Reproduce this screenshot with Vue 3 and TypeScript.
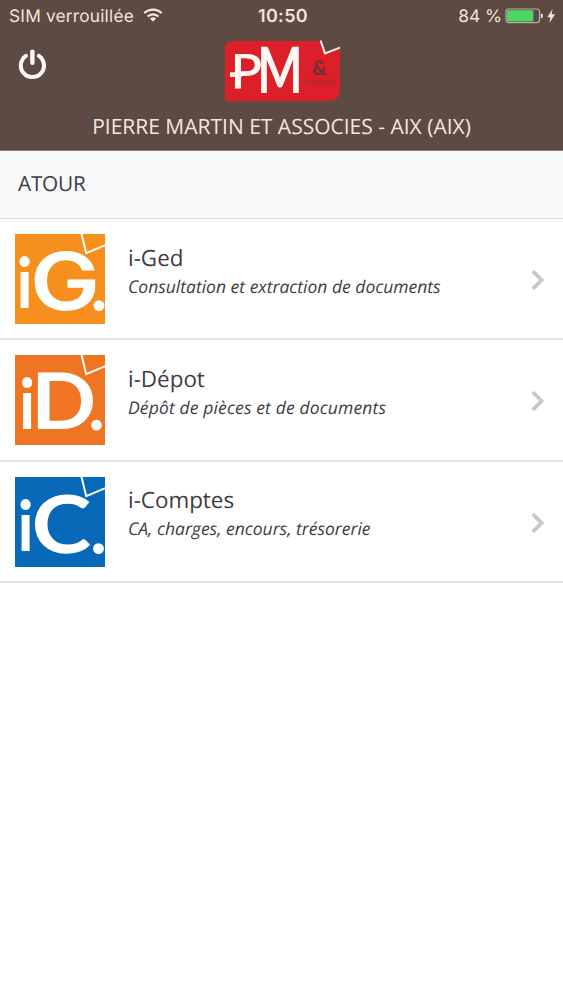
<script setup lang="ts">
interface Glyph {
  char: string
  x: number
  y: number
  sx: number
  size: number
  round?: boolean
}

interface Service {
  title: string
  detail: string
  color: string
  glyphs: Glyph[]
  dot: { x: number; y: number }
  wide?: boolean
}

const services: Service[] = [
  {
    title: 'i-Ged',
    detail: 'Consultation et extraction de documents',
    color: '#f78f1e',
    glyphs: [
      { char: 'i', x: 1.6, y: 74, sx: 0.91, size: 70 },
      { char: 'G', x: 15, y: 76, sx: 1.17, size: 80, round: true },
    ],
    dot: { x: 84, y: 71.6 },
  },
  {
    title: 'i-Dépot',
    detail: 'Dépôt de pièces et de documents',
    color: '#f07522',
    glyphs: [
      { char: 'i', x: 4, y: 74, sx: 0.91, size: 70 },
      { char: 'D', x: 16, y: 74, sx: 1.1, size: 78 },
    ],
    dot: { x: 81.5, y: 70.2 },
    wide: true,
  },
  {
    title: 'i-Comptes',
    detail: 'CA, charges, encours, trésorerie',
    color: '#0769b8',
    glyphs: [
      { char: 'i', x: 2.6, y: 74, sx: 0.91, size: 70 },
      { char: 'C', x: 16.5, y: 76, sx: 1.13, size: 80 },
    ],
    dot: { x: 83.5, y: 71.6 },
  },
]
</script>

<template>
  <div class="screen">
    <header class="header">
      <div class="status">
        <div class="carrier">
          <span>SIM verrouillée</span>
          <svg class="wifi" width="20" height="14" viewBox="0 0 20 14" fill="none" stroke="#f4eae2" stroke-width="2.3">
            <path d="M1.3 5.1a12.4 12.4 0 0 1 17.4 0" />
            <path d="M4.6 8.5a7.7 7.7 0 0 1 10.8 0" />
            <path d="M10 13.6 7 10.7a4.3 4.3 0 0 1 6 0z" fill="#f4eae2" stroke="none" />
          </svg>
        </div>
        <div class="clock">10:50</div>
        <div class="power-level">
          <span>84 %</span>
          <svg class="battery" width="52" height="16" viewBox="0 0 52 16">
            <rect x="1" y="1" width="33.5" height="13.6" rx="2.6" fill="none" stroke="#b8aea6" stroke-width="1.2" />
            <rect x="2.1" y="2.2" width="26.2" height="11.3" rx="1.2" fill="#4cd863" />
            <path d="M35.9 5.2q2.1.6 2.1 2.6t-2.1 2.6z" fill="#f4eae2" />
            <path d="M47.6 1 42.3 9.2h3.2L44.4 15l5.6-8.8h-3.4z" fill="#f4eae2" />
          </svg>
        </div>
      </div>
      <div class="brand">
        <svg class="power" width="30" height="32" viewBox="0 0 30 32" fill="none" stroke="#fffaf4" stroke-width="4" stroke-linecap="round">
          <path d="M9 7.8a11.6 11.6 0 1 0 12.8 0" />
          <path d="M15.4 3.6v11.2" stroke-width="4.4" />
        </svg>
        <svg class="logo" width="118" height="64" viewBox="0 0 118 64">
          <path d="M9 2H97l4 12 15-6V50q0 12-12 12H3q-2 0-2-2V10q0-8 8-8z" fill="#dc1f28" />
          <path d="M96.6 1.5 101 14.5 116 8.6" fill="none" stroke="#fff3ee" stroke-width="2" />
          <text class="logo-letter logo-thin" transform="translate(6.8 49) scale(1.1 1)" font-size="47">P</text>
          <path d="M6 35.6h12" stroke="#fff8f3" stroke-width="4.6" />
          <text class="logo-letter" transform="translate(33.2 54) scale(.75 1)" font-size="64">M</text>
          <text class="logo-and" x="88" y="36">&amp;</text>
          <text class="logo-small" x="80" y="45" textLength="32" lengthAdjust="spacingAndGlyphs">ASSOCIES</text>
        </svg>
      </div>
      <h1 class="company">PIERRE MARTIN ET ASSOCIES - AIX (AIX)</h1>
    </header>

    <h2 class="section">ATOUR</h2>

    <ul class="services">
      <li v-for="service in services" :key="service.title" class="service">
        <svg class="tile" width="90" height="90" viewBox="0 0 90 90">
          <rect width="90" height="90" :fill="service.color" />
          <text
            v-for="glyph in service.glyphs"
            :key="glyph.char"
            class="tile-letter"
            :class="{ round: glyph.round }"
            :font-size="glyph.size"
            :transform="`translate(${glyph.x} ${glyph.y}) scale(${glyph.sx} 1)`"
          >{{ glyph.char }}</text>
          <circle :cx="service.dot.x" :cy="service.dot.y" r="5.4" fill="#fff" />
          <path d="M66.3-1 71.2 19.2 91 10.8" fill="none" stroke="#fff" stroke-width="2" />
        </svg>
        <div class="copy">
          <div class="title">{{ service.title }}</div>
          <div class="detail" :class="{ wide: service.wide }">{{ service.detail }}</div>
        </div>
        <svg class="chevron" width="16" height="22" viewBox="0 0 16 22" fill="none" stroke="#c8c8ca" stroke-width="3.8">
          <path d="M2.8 2.2 11.6 11 2.8 19.8" />
        </svg>
      </li>
    </ul>
  </div>
</template>

<style>
body {
  margin: 0;
  background: #fff;
}
</style>

<style scoped>
.screen {
  width: 563px;
  height: 1000px;
  overflow: hidden;
  background: #fff;
  color: #3d3d44;
  font-family: 'Open Sans', 'Noto Sans', sans-serif;
  text-rendering: geometricPrecision;
}

.header {
  box-sizing: border-box;
  height: 151px;
  background: #5c4a43;
  border-bottom: 1px solid #8d8080;
}

.status {
  display: grid;
  grid-template-columns: 1fr auto 1fr;
  align-items: center;
  height: 33px;
  padding: 0 6px 0 9px;
  color: #f0e4db;
  font-family: Inter, Roboto, sans-serif;
  font-size: 17.3px;
}

.carrier,
.power-level {
  display: flex;
  align-items: center;
}

.carrier {
  gap: 9px;
  letter-spacing: 0.2px;
}

.wifi {
  margin-top: -4px;
}

.battery {
  margin-top: -2px;
}

.clock {
  font-size: 18px;
  font-weight: 600;
  letter-spacing: 0.3px;
}

.power-level {
  justify-content: flex-end;
  gap: 3px;
}

.brand {
  display: grid;
  grid-template-columns: 224px 118px;
  height: 75px;
}

.power {
  margin: 15px 0 0 17px;
}

.logo {
  margin-top: 6px;
}

.logo-letter {
  fill: #fff8f3;
  font-family: Lato, sans-serif;
  font-weight: 700;
}

.logo-thin {
  font-weight: 400;
  stroke: #fff8f3;
  stroke-width: 0.9;
}

.logo-and {
  fill: #743035;
  font-family: Lato, sans-serif;
  font-size: 20px;
  font-weight: 900;
}

.logo-small {
  fill: #962c32;
  font-family: Lato, sans-serif;
  font-size: 6px;
}

.company {
  margin: 5px 0 0;
  color: #f3e6dd;
  font-size: 21px;
  font-weight: 400;
  line-height: 28px;
  text-align: center;
  white-space: nowrap;
}

.section {
  box-sizing: border-box;
  height: 68px;
  margin: 0;
  padding-left: 18px;
  border-bottom: 1.5px solid #dededf;
  background: #f9fafc;
  font-size: 20.8px;
  font-weight: 400;
  letter-spacing: -0.25px;
  line-height: 66px;
}

.services {
  margin: 0;
  padding: 0;
  list-style: none;
}

.service {
  display: flex;
  box-sizing: border-box;
  height: 121.4px;
  padding: 15px 17px 0 15px;
  border-bottom: 2px solid #e3e3e5;
}

.tile {
  flex: none;
}

.tile-letter {
  fill: #fff;
  font-family: Lato, sans-serif;
  font-weight: 700;
}

.tile-letter.round {
  font-family: Inter, sans-serif;
  font-weight: 600;
}

.copy {
  flex: 1;
  padding: 8.6px 0 0 23px;
}

.title {
  font-size: 22.4px;
  line-height: 30px;
}

.detail {
  font-size: 17.5px;
  font-style: italic;
  line-height: 28px;
}

.detail.wide {
  letter-spacing: 0.14px;
}

.chevron {
  margin-top: 35px;
}
</style>
